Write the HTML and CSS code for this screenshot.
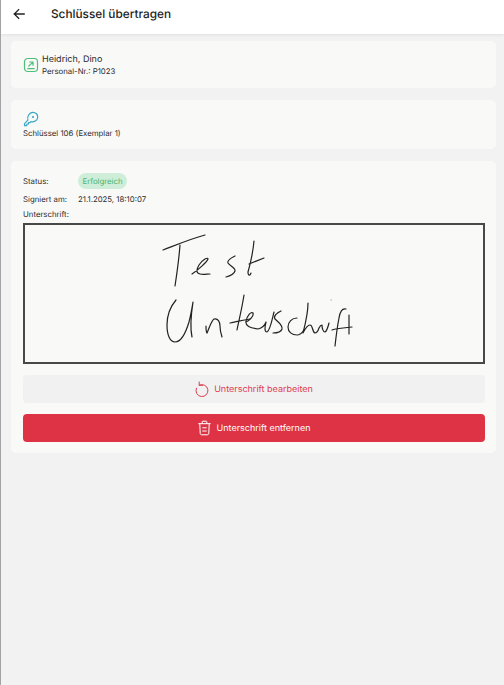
FILE: index.html
```html
<!DOCTYPE html>
<html lang="de">
<head>
  <meta charset="UTF-8">
  <meta name="viewport" content="width=device-width, initial-scale=1.0">
  <title>Schlüssel übertragen</title>
  <link rel="stylesheet" href="styles.css">
</head>
<body>
  <header class="topbar">
    <svg class="back-icon" viewBox="0 0 14 14" width="12" height="12">
      <path d="M13 7H1.500M6.600 1.900 1.500 7l5.100 5.100"/>
    </svg>
    <h1>Schlüssel übertragen</h1>
  </header>

  <main class="content">
    <section class="card person-card">
      <svg class="person-icon" viewBox="0 0 16 16" width="16" height="16">
        <rect x="1.500" y="1.500" width="13" height="13" rx="3.200"/>
        <path d="M5.800 9 10 5.100M6.600 5H10v3.300M4.700 11.600h6.600"/>
      </svg>
      <div class="person-text">
        <div class="person-name">Heidrich, Dino</div>
        <div class="person-id">Personal-Nr.: P1023</div>
      </div>
    </section>

    <section class="card key-card">
      <svg class="key-icon" viewBox="0 0 16 16" width="16" height="16">
        <path d="M4.900 9.200 1.500 12.700v2l2.200-.1.200-1.500 1.500-.1.100-1.500 1.400.1.900-1c3.100 1 6.700-1 6.900-4.300C15 3.500 12.700 1.300 9.700 1.400 6.200 1.600 3.900 5.400 4.900 9.200Z"/>
        <circle class="key-hole" cx="10" cy="6" r="1.100"/>
      </svg>
      <div class="key-name">Schlüssel 106 (Exemplar 1)</div>
    </section>

    <section class="card detail-card">
      <div class="detail-row status-row">
        <span class="detail-label">Status:</span>
        <span class="badge">Erfolgreich</span>
      </div>
      <div class="detail-row date-row">
        <span class="detail-label">Signiert am:</span>
        <span>21.1.2025, 18:10:07</span>
      </div>
      <div class="signature-label">Unterschrift:</div>
      <div class="signature-box">
        <svg viewBox="25 225 458 137" width="458" height="137">
          <path d="M163 250C176 245 190 239 205 235"/>
          <path d="M180 245C179 258 177 273 175 286"/>
          <path d="M192 274C198 270 207 262 208 259C208 257 203 259 199 265C196 270 196 273 200 274C203 275 207 274 210 274"/>
          <path d="M235 256C231 258 227 261 228 263C230 266 236 268 235 271C234 274 230 276 226 277"/>
          <path d="M254 241C253 252 250 265 248 272C248 276 250 276 251 273M249 264C254 262 259 260 264 258"/>
          <path d="M176 300C170 307 167 316 167 325C167 335 170 342 175 342C181 342 186 332 189 322C191 314 192 308 193 302C191 315 190 328 192 337"/>
          <path d="M206 326C206 329 206 332 207 333C209 329 211 321 214 319C218 318 220 322 220 326C220 330 221 334 222 337"/>
          <path d="M244 295C242 308 239 320 237 330M230 323C236 322 242 320 250 319"/>
          <path d="M246 322C250 320 254 316 253 313C251 311 247 316 246 321C245 326 250 328 258 329C262 328 265 325 266 322C265 326 264 332 267 332C270 331 272 320 274 312"/>
          <path d="M281 311C277 313 273 316 275 319C278 322 283 325 282 329C281 332 277 333 273 333"/>
          <path d="M297 318C292 318 288 322 288 327C288 332 292 335 297 335C300 335 302 333 304 330"/>
          <path d="M308 303C308 314 305 325 303 333C305 329 307 325 310 325C313 325 312 332 315 333C317 333 318 331 319 328C320 326 321 325 322 325C322 328 323 332 325 332C327 331 328 327 329 323"/>
          <path d="M346 309C342 308 340 312 339 318C337 328 336 337 335 346M332 330C338 328 345 328 352 327M349 315C349 322 349 328 349 334"/>
          <path class="signature-dot" d="M331 300h.3"/>
        </svg>
      </div>
      <button class="btn btn-edit">
        <svg viewBox="0 0 14 16" width="14" height="16">
          <path d="M4.200 4.200A6 6 0 1 1 1.400 7.200M4.200 1l0 3.200 3.200.2"/>
        </svg>
        Unterschrift bearbeiten
      </button>
      <button class="btn btn-remove">
        <svg viewBox="0 0 14 16" width="14" height="16">
          <path d="M.7 3.700h11.600M4.200 3.500V1.700c0-.3.200-.5.500-.5h3.600c.3 0 .5.200.5.500v1.800M1.800 3.900l.4 9.400c0 .9.600 1.500 1.500 1.500h5.600c.9 0 1.500-.6 1.500-1.500l.4-9.400M4.700 7.800h3.600M4.700 11h3.600"/>
        </svg>
        Unterschrift entfernen
      </button>
    </section>
  </main>
</body>
</html>
```

FILE: styles.css
```css
* {
  margin: 0;
  padding: 0;
  box-sizing: border-box;
}

body {
  font-family: 'Inter', sans-serif;
  font-size: 7.8px;
  color: #2b2b2b;
  background: #f2f2f2;
  border-left: 1px solid #a3a3a3;
  min-height: 685px;
  overflow: hidden;
  text-rendering: geometricPrecision;
}

svg {
  display: block;
  flex-shrink: 0;
  fill: none;
  stroke-linecap: round;
  stroke-linejoin: round;
}

/* Header */
.topbar {
  display: flex;
  align-items: center;
  height: 34px;
  padding: 0 0 6px 12px;
  background: #fff;
  box-shadow: 0 1px 3px rgba(0, 0, 0, 0.08);
}

.topbar h1 {
  margin-left: 26px;
  font-size: 11.8px;
  font-weight: 500;
  color: #222;
}

.back-icon {
  stroke: #222;
  stroke-width: 1.5;
  stroke-linecap: square;
  stroke-linejoin: miter;
}

/* Cards */
.content {
  display: flex;
  flex-direction: column;
  gap: 12px;
  padding: 7px 8px 0 10px;
}

.card {
  background: #f9f9f8;
  border-radius: 5px;
  padding: 12px 11px 12px 12px;
}

.person-card {
  display: flex;
  align-items: center;
  gap: 3px;
  height: 47px;
}

.person-icon {
  stroke: #4fbf78;
  stroke-width: 1.2;
}

.person-text {
  padding-top: 2px;
}

.person-name {
  font-size: 9px;
  line-height: 12px;
}

.person-id {
  line-height: 11px;
}

.key-card {
  height: 49px;
  padding-top: 11px;
}

.key-icon {
  stroke: #38a7c6;
  stroke-width: 1.2;
}

.key-hole {
  fill: #38a7c6;
  stroke: none;
}

.key-name {
  margin-top: 1px;
  line-height: 11px;
}

/* Details */
.detail-card {
  height: 292px;
}

.detail-row {
  display: flex;
  align-items: center;
}

.detail-label {
  width: 55px;
}

.status-row {
  height: 16px;
}

.date-row {
  height: 11px;
  margin-top: 4px;
}

.badge {
  padding: 0 4.500px;
  line-height: 16px;
  border-radius: 8px;
  background: #cfeeda;
  color: #4bb56f;
}

.signature-label {
  margin-top: 5px;
  line-height: 11px;
}

.signature-box {
  margin-top: 3px;
  height: 141px;
  border: 2px solid #484848;
}

.signature-box svg {
  stroke: #222;
  stroke-width: 1.2;
}

.signature-box .signature-dot {
  stroke: #999;
}

/* Buttons */
.btn {
  display: flex;
  align-items: center;
  justify-content: center;
  gap: 5px;
  width: 100%;
  height: 28px;
  border: none;
  border-radius: 4px;
  font-family: inherit;
  font-size: 9px;
  text-rendering: geometricPrecision;
  cursor: pointer;
}

.btn svg {
  stroke: currentColor;
  stroke-width: 1;
}

.btn-edit {
  margin-top: 11px;
  background: #f1f1f1;
  color: #dc3c50;
}

.btn-remove {
  margin-top: 11px;
  background: #de3345;
  color: #fff;
}
```
